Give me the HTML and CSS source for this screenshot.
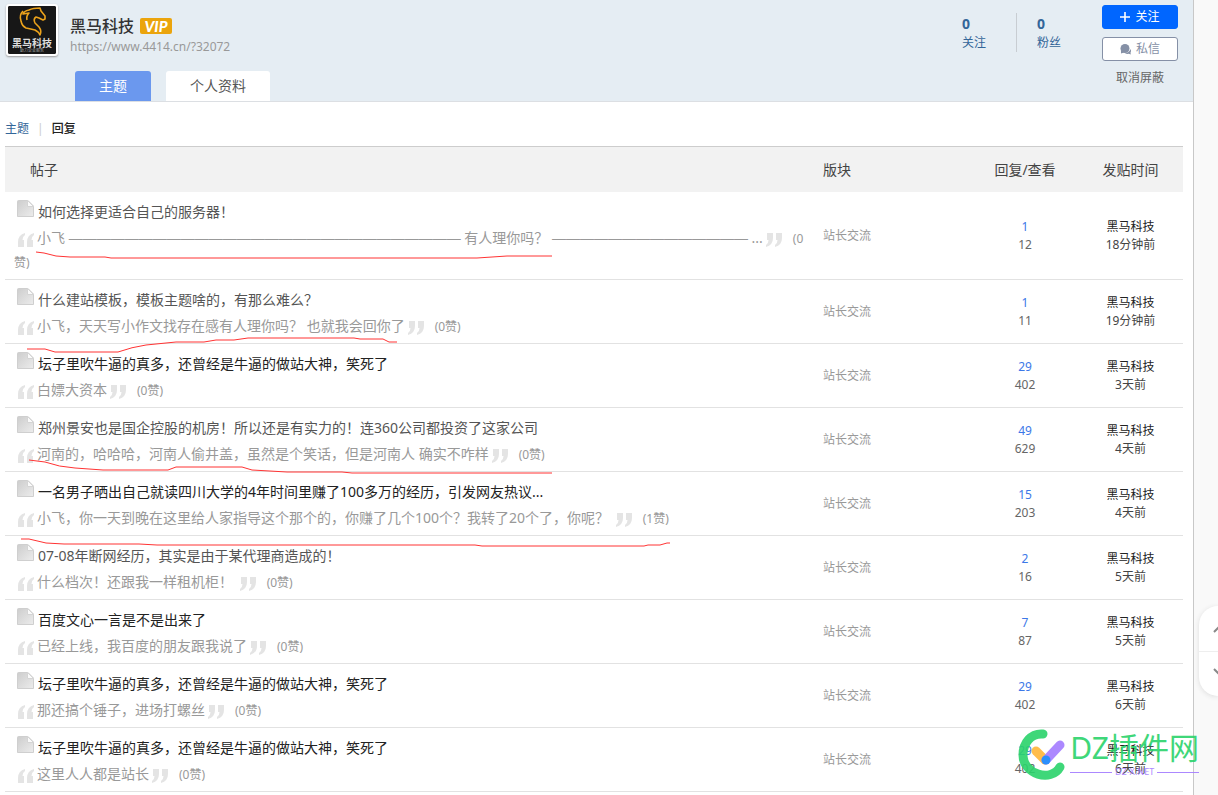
FILE: index.html
```html
<!DOCTYPE html>
<html lang="zh-CN">
<head>
<meta charset="utf-8">
<title>黑马科技</title>
<link rel="stylesheet" href="styles.css">
</head>
<body>
<svg class="defs" aria-hidden="true">
  <defs>
    <linearGradient id="paper" x1="0" y1="0" x2="1" y2="1"><stop offset="0" stop-color="#cdcdcd"/><stop offset="1" stop-color="#ececec"/></linearGradient>
    <symbol id="doc" viewBox="0 0 17 17"><path d="M.5 1.500a1 1 0 0 1 1-1H11l5.500 5.500v10.500H.5z" fill="url(#paper)" stroke="#cfcfcf"/><path d="M10.500.5v6h6z" fill="#fafafa" stroke="#d4d4d4"/></symbol>
    <symbol id="open" viewBox="0 0 16 14"><path d="M7 0v2Q4.500 3.500 4.500 7H6v7H0V9Q0 2 7 0zM16 0v2q-2.500 1.500-2.500 5H15v7H9V9q0-7 7-9z" fill="#e4e4e4"/></symbol>
    <symbol id="close" viewBox="0 0 16 14"><path d="M0 14v-2q2.500-1.500 2.500-5H1V0h6v5q0 7-7 9zM9 14v-2q2.500-1.500 2.500-5H10V0h6v5q0 7-7 9z" fill="#e4e4e4"/></symbol>
  </defs>
</svg>
<div class="page">
  <header class="header">
    <div class="header-main">
      <div class="profile">
        <svg class="avatar" viewBox="0 0 48 48" role="img" aria-label="黑马科技">
          <rect width="48" height="48" rx="1" fill="#171717"/>
          <path d="M15 5Q11 9 13 15q1 5 5 7 5 1 9 2 4 2 5 5 2-4-1-8l-4-4q-2-4 1-6l3 1 4 2 2-1 0-3-4-5-1-3Q25 2 21 4q-5 1-6 4l6-1q-3 3-2 7" fill="none" stroke="#eba21b" stroke-width="1.600" stroke-linejoin="round"/>
          <text class="avatar-name" x="24" y="41">黑马科技</text>
          <text class="avatar-sub" x="24" y="46">助力企业服务</text>
        </svg>
        <div>
          <div class="name-row"><h1 class="name">黑马科技</h1><span class="vip">VIP</span></div>
          <a class="url" href="#">https://www.4414.cn/?32072</a>
        </div>
      </div>
      <nav class="tabs"><a class="tab active" href="#">主题</a><a class="tab" href="#">个人资料</a></nav>
    </div>
    <div class="stats">
      <a class="stat" href="#"><strong>0</strong>关注</a>
      <a class="stat" href="#"><strong>0</strong>粉丝</a>
    </div>
    <div class="actions">
      <button class="btn primary" type="button"><svg width="10" height="10" viewBox="0 0 10 10"><path d="M5 0v10M0 5h10" stroke="#fff" stroke-width="1.600"/></svg>关注</button>
      <button class="btn" type="button"><svg width="11" height="11" viewBox="0 0 11 11"><circle cx="5" cy="4.500" r="4.500" fill="#8590a6"/><path d="M1 6v3.500l3-1M10.500 5q1 2 0 3.500l.3 2-2-.7q-2 .5-4-.7 4.500 0 5.700-4.100z" fill="#8590a6"/></svg>私信</button>
      <a class="unblock" href="#">取消屏蔽</a>
    </div>
  </header>

  <nav class="subnav"><a href="#">主题</a><span class="bar">|</span><a class="current" href="#">回复</a></nav>

  <main class="content">
    <table class="threads">
      <thead><tr><th class="post">帖子</th><th class="forum">版块</th><th class="count">回复/查看</th><th class="time">发贴时间</th></tr></thead>
      <tbody>
        <tr>
          <td><div class="title read"><svg class="doc"><use href="#doc"/></svg><a href="#">如何选择更适合自己的服务器！</a></div>
          <div class="quote"><svg class="mark"><use href="#open"/></svg><a href="#">小飞 <span class="dash">————————————————————————————</span> 有人理你吗？ <span class="dash">——————————————</span> ...</a><svg class="mark end"><use href="#close"/></svg><span class="likes">(0赞)</span></div></td>
          <td class="forum">站长交流</td><td class="count"><a href="#">1</a><br>12</td><td class="time"><a href="#">黑马科技</a><br>18分钟前</td>
        </tr>
        <tr>
          <td><div class="title read"><svg class="doc"><use href="#doc"/></svg><a href="#">什么建站模板，模板主题啥的，有那么难么？</a></div>
          <div class="quote"><svg class="mark"><use href="#open"/></svg><a href="#">小飞，天天写小作文找存在感有人理你吗？ 也就我会回你了</a><svg class="mark end"><use href="#close"/></svg><span class="likes">(0赞)</span></div></td>
          <td class="forum">站长交流</td><td class="count"><a href="#">1</a><br>11</td><td class="time"><a href="#">黑马科技</a><br>19分钟前</td>
        </tr>
        <tr>
          <td><div class="title"><svg class="doc"><use href="#doc"/></svg><a href="#">坛子里吹牛逼的真多，还曾经是牛逼的做站大神，笑死了</a></div>
          <div class="quote"><svg class="mark"><use href="#open"/></svg><a href="#">白嫖大资本</a><svg class="mark end"><use href="#close"/></svg><span class="likes">(0赞)</span></div></td>
          <td class="forum">站长交流</td><td class="count"><a href="#">29</a><br>402</td><td class="time"><a href="#">黑马科技</a><br>3天前</td>
        </tr>
        <tr>
          <td><div class="title read"><svg class="doc"><use href="#doc"/></svg><a href="#">郑州景安也是国企控股的机房！所以还是有实力的！连360公司都投资了这家公司</a></div>
          <div class="quote"><svg class="mark"><use href="#open"/></svg><a href="#">河南的，哈哈哈，河南人偷井盖，虽然是个笑话，但是河南人 确实不咋样</a><svg class="mark end"><use href="#close"/></svg><span class="likes">(0赞)</span></div></td>
          <td class="forum">站长交流</td><td class="count"><a href="#">49</a><br>629</td><td class="time"><a href="#">黑马科技</a><br>4天前</td>
        </tr>
        <tr>
          <td><div class="title"><svg class="doc"><use href="#doc"/></svg><a href="#">一名男子晒出自己就读四川大学的4年时间里赚了100多万的经历，引发网友热议...</a></div>
          <div class="quote"><svg class="mark"><use href="#open"/></svg><a href="#">小飞，你一天到晚在这里给人家指导这个那个的，你赚了几个100个？我转了20个了，你呢？</a> <svg class="mark end"><use href="#close"/></svg><span class="likes">(1赞)</span></div></td>
          <td class="forum">站长交流</td><td class="count"><a href="#">15</a><br>203</td><td class="time"><a href="#">黑马科技</a><br>4天前</td>
        </tr>
        <tr>
          <td><div class="title read"><svg class="doc"><use href="#doc"/></svg><a href="#">07-08年断网经历，其实是由于某代理商造成的！</a></div>
          <div class="quote"><svg class="mark"><use href="#open"/></svg><a href="#">什么档次！还跟我一样租机柜！</a> <svg class="mark end"><use href="#close"/></svg><span class="likes">(0赞)</span></div></td>
          <td class="forum">站长交流</td><td class="count"><a href="#">2</a><br>16</td><td class="time"><a href="#">黑马科技</a><br>5天前</td>
        </tr>
        <tr>
          <td><div class="title"><svg class="doc"><use href="#doc"/></svg><a href="#">百度文心一言是不是出来了</a></div>
          <div class="quote"><svg class="mark"><use href="#open"/></svg><a href="#">已经上线，我百度的朋友跟我说了</a><svg class="mark end"><use href="#close"/></svg><span class="likes">(0赞)</span></div></td>
          <td class="forum">站长交流</td><td class="count"><a href="#">7</a><br>87</td><td class="time"><a href="#">黑马科技</a><br>5天前</td>
        </tr>
        <tr>
          <td><div class="title"><svg class="doc"><use href="#doc"/></svg><a href="#">坛子里吹牛逼的真多，还曾经是牛逼的做站大神，笑死了</a></div>
          <div class="quote"><svg class="mark"><use href="#open"/></svg><a href="#">那还搞个锤子，进场打螺丝</a><svg class="mark end"><use href="#close"/></svg><span class="likes">(0赞)</span></div></td>
          <td class="forum">站长交流</td><td class="count"><a href="#">29</a><br>402</td><td class="time"><a href="#">黑马科技</a><br>6天前</td>
        </tr>
        <tr>
          <td><div class="title"><svg class="doc"><use href="#doc"/></svg><a href="#">坛子里吹牛逼的真多，还曾经是牛逼的做站大神，笑死了</a></div>
          <div class="quote"><svg class="mark"><use href="#open"/></svg><a href="#">这里人人都是站长</a><svg class="mark end"><use href="#close"/></svg><span class="likes">(0赞)</span></div></td>
          <td class="forum">站长交流</td><td class="count"><a href="#">29</a><br>402</td><td class="time"><a href="#">黑马科技</a><br>6天前</td>
        </tr>
      </tbody>
    </table>
  </main>
</div>

<svg class="strokes" width="700" height="560" viewBox="0 0 700 560" aria-hidden="true">
  <path d="M36 252l8 1 12 3 14 1h35l6 1h366l30-2h45"/>
  <path d="M27 349h18l10 3h63q14-5 28-7l30-3h28l12-2h18l14-2h106l6 1h23l6 3h8"/>
  <path d="M29 460l16 2q14 5 30 6l28 2h65l8-3h66l10 3 35 2h55l10 1h200"/>
  <path d="M21 539h8l17 4 18 1h75l18 1h318l7 1h162l4-1h12l7-2h3"/>
</svg>

<div class="pager">
  <button type="button" aria-label="向上"><svg width="12" height="8" viewBox="0 0 12 8"><path d="M1 7l5-5 5 5"/></svg></button>
  <button type="button" aria-label="向下"><svg width="12" height="8" viewBox="0 0 12 8"><path d="M1 1l5 5 5-5"/></svg></button>
</div>

<div class="brand">
  <svg width="48" height="52" viewBox="0 0 48 52" fill="none" stroke-linecap="round" stroke-width="9" aria-hidden="true">
    <path d="M25 5C13 4 5 14 5 26c0 19 28 28 37 12" stroke="#2bd36b"/>
    <path d="M18 22l9 9" stroke="#ffb638"/><path d="M42 16L28 31" stroke="#a47cff"/><path d="M28 31h0" stroke="#1684fc"/>
  </svg>
  <div class="brand-text"><span class="brand-name">DZ插件网</span><span class="brand-url">DZ-X.NET</span></div>
</div>
</body>
</html>
```
FILE: styles.css
```css
* { box-sizing: border-box; }
body {
  margin: 0;
  position: relative;
  min-height: 100vh;
  display: flex;
  padding-right: 24px;
  background: #f9f9f9;
  color: #444;
  font: 12px/18px "Noto Sans", "Noto Sans CJK SC", sans-serif;
}
a { color: inherit; text-decoration: none; }
.defs { position: absolute; width: 0; height: 0; }
.page { flex: 1; min-width: 0; background: #fff; border-right: 1px solid #c8c8c8; }

.header { display: flex; align-items: flex-start; background: #e5edf3; border-bottom: 1px solid #dcdfe3; padding-right: 15px; }
.header-main { flex: 1; }
.profile { display: flex; gap: 12px; padding: 4px 6px 0; height: 71px; }
.avatar { width: 52px; height: 52px; padding: 2px; background: #fff; border-radius: 3px; box-shadow: 0 1px 2px #999; }
.avatar-name { font-size: 10px; font-weight: bold; fill: #ddd; text-anchor: middle; }
.avatar-sub { font-size: 4px; fill: #aaa; text-anchor: middle; }
.name-row { display: flex; align-items: center; gap: 6px; padding-top: 10px; }
.name { margin: 0; font-size: 16px; line-height: 24px; font-weight: 500; color: #333; }
.vip { width: 32px; height: 16px; border-radius: 2px; background: #eba40c; color: #fff; font: italic 900 15px/16px Lato, sans-serif; text-align: center; }
.url { display: block; color: #999; }
.tabs { display: flex; gap: 15px; padding-left: 75px; }
.tab { padding: 0 24px; border-radius: 3px 3px 0 0; background: #fff; color: #555; font-size: 14px; line-height: 30px; }
.tab.active { background: #6b98ee; color: #fff; }
.stats { display: flex; padding-top: 13px; color: #369; }
.stat { padding: 1px 30px 0 0; height: 39px; }
.stat + .stat { border-left: 1px solid #c8cdd2; padding: 1px 41px 0 20px; }
.stat strong { display: block; font-size: 14px; line-height: 20px; }
.actions { width: 76px; display: flex; flex-direction: column; gap: 8px; padding-top: 5px; }
.btn { display: flex; align-items: center; justify-content: center; gap: 5px; height: 24px; padding: 0; border: 1px solid #8590a6; border-radius: 3px; background: #fff; color: #8590a6; font: inherit; }
.btn.primary { background: #06f; border-color: #06f; color: #fff; }
.unblock { color: #666; text-align: center; }

.subnav { display: flex; gap: 8px; height: 44px; padding: 18px 5px 0; color: #369; }
.bar { color: #ccc; }
.current { color: #222; font-weight: 500; }

.content { padding: 0 10px 0 5px; }
.threads { width: 100%; table-layout: fixed; border-spacing: 0; border-top: 1px solid #cdcdcd; }
th { height: 45px; padding: 0; background: #f2f2f2; color: #444; font-size: 14px; font-weight: 400; text-align: left; }
th.post { padding-left: 25px; }
th.forum { width: 158px; }
th.count { width: 106px; }
th.time { width: 105px; }
td { padding: 8px 9px 5px; border-bottom: 1px solid #e2e2e2; }
.threads .forum { padding-left: 9px; }
.threads .count, .threads .time { padding-left: 0; padding-right: 0; text-align: center; }
td.forum, td.count, td.time { padding-top: 5px; padding-bottom: 5px; }
td.forum { color: #999; }
td.count { color: #666; }
td.count a { color: #3c78e8; }
td.time a { color: #222; }
.title { margin-bottom: 2px; color: #222; font-size: 14px; line-height: 24px; display: flex; }
.title.read { color: #555; }
.doc { width: 17px; height: 17px; margin: 0 4px 0 3px; }
.quote { color: #999; font-size: 14px; line-height: 24px; }
.dash { font-family: "Liberation Sans", sans-serif; line-height: 1; }
.mark { width: 16px; height: 14px; margin: 0 3px 0 4px; vertical-align: -4px; }
.mark.end { margin: 0 11px 0 3px; }
.likes { font-size: 12px; line-height: 18px; }

.strokes { position: absolute; left: 0; top: 0; fill: none; stroke: #f33; pointer-events: none; }

.pager { position: absolute; right: 0; top: 606px; width: 19px; overflow: hidden; background: #fff; border-radius: 20px 0 0 20px; box-shadow: 0 1px 5px #ddd; }
.pager button { display: block; width: 40px; height: 45px; padding: 0; border: 0; background: none; }
.pager button + button { border-top: 1px solid #eee; padding-bottom: 4px; }
.pager svg { display: block; margin: 0 14px; fill: none; stroke: #888; stroke-width: 2; }

.brand { position: absolute; right: 19px; top: 729px; display: flex; gap: 4px; opacity: .9; }
.brand-text { display: flex; flex-direction: column; }
.brand-name { color: #2bd36b; font-size: 30px; line-height: 38px; font-weight: 400; }
.brand-url { display: flex; align-items: center; gap: 3px; color: #a47cff; font-size: 9px; line-height: 10px; }
.brand-url::before, .brand-url::after { content: ""; flex: 1; height: 1px; background: #a47cff; }
```
